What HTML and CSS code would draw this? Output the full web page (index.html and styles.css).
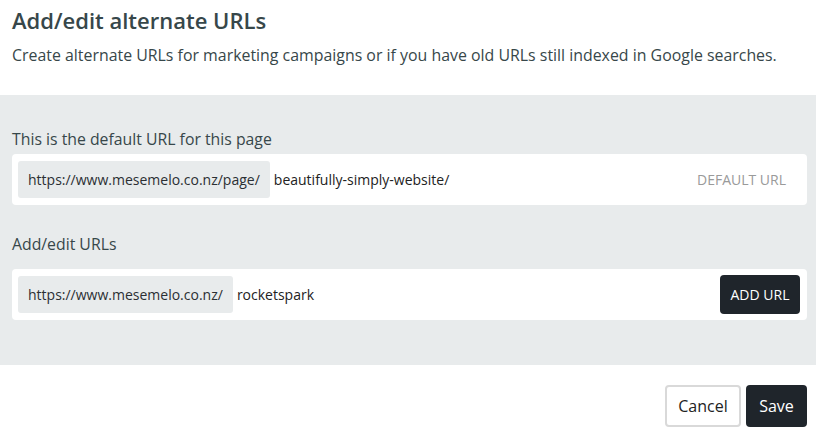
FILE: index.html
```html
<!DOCTYPE html>
<html>
<head>
<meta charset="utf-8">
<link rel="stylesheet" href="styles.css">
</head>
<body>
<div class="modal">
  <header class="head">
    <h1 class="title">Add/edit alternate URLs</h1>
    <p class="desc">Create alternate URLs for marketing campaigns or if you have old URLs still indexed in Google searches.</p>
  </header>
  <section class="panel">
    <div class="label">This is the default URL for this page</div>
    <div class="card">
      <span class="prefix">https://www.mesemelo.co.nz/page/</span>
      <span class="slug">beautifully-simply-website/</span>
      <span class="tag">DEFAULT URL</span>
    </div>
    <div class="label label2">Add/edit URLs</div>
    <div class="card">
      <span class="prefix">https://www.mesemelo.co.nz/</span>
      <span class="slug">rocketspark</span>
      <button class="add">ADD URL</button>
    </div>
  </section>
  <footer class="foot">
    <button class="btn cancel">Cancel</button>
    <button class="btn save">Save</button>
  </footer>
</div>
</body>
</html>
```
FILE: styles.css
```css
* { box-sizing: border-box; }
body {
  margin: 0;
  background: #fff;
  font-family: "Open Sans", Lato, sans-serif;
  color: #37474a;
}
.modal { width: 816px; height: 438px; }
.head { padding: 6px 12px 0; height: 95px; }
.title {
  margin: 0;
  font-size: 22px;
  font-weight: 600;
  line-height: 28px;
  color: #37474a;
}
.desc {
  margin: 11px 0 0;
  font-size: 15.9px;
  line-height: 20px;
}
.panel {
  background: #e8ebec;
  height: 270px;
  padding: 34px 9px 0 12px;
}
.label {
  font-size: 15.8px;
  line-height: 20px;
  margin-bottom: 5px;
}
.label2 { margin-top: 29px; margin-bottom: 15px; }
.card {
  background: #fff;
  border-radius: 4px;
  height: 51px;
  display: flex;
  align-items: center;
  padding: 0 7px 0 6px;
  font-size: 14px;
  color: #222;
}
.prefix {
  background: #e8ebec;
  border-radius: 3px;
  height: 37px;
  line-height: 37px;
  padding: 0 10px;
  color: #2b2f33;
}
.slug { margin-left: 4px; flex: 1; }
.tag { color: #9a9a9a; margin-right: 14px; }
.add {
  background: #1f252b;
  color: #fff;
  border: 0;
  border-radius: 4px;
  height: 39px;
  width: 80px;
  font: inherit;
  font-size: 14px;
}
.foot {
  display: flex;
  justify-content: flex-end;
  gap: 5px;
  padding: 20px 9px 0;
}
.btn {
  height: 42px;
  border-radius: 4px;
  font-family: "Open Sans", sans-serif;
  font-size: 16px;
  padding: 0 10px;
}
.cancel { background: #fff; border: 2px solid #d9d9d9; color: #222; width: 76px; }
.save { background: #1f252b; border: 0; color: #fff; width: 61px; }
```
